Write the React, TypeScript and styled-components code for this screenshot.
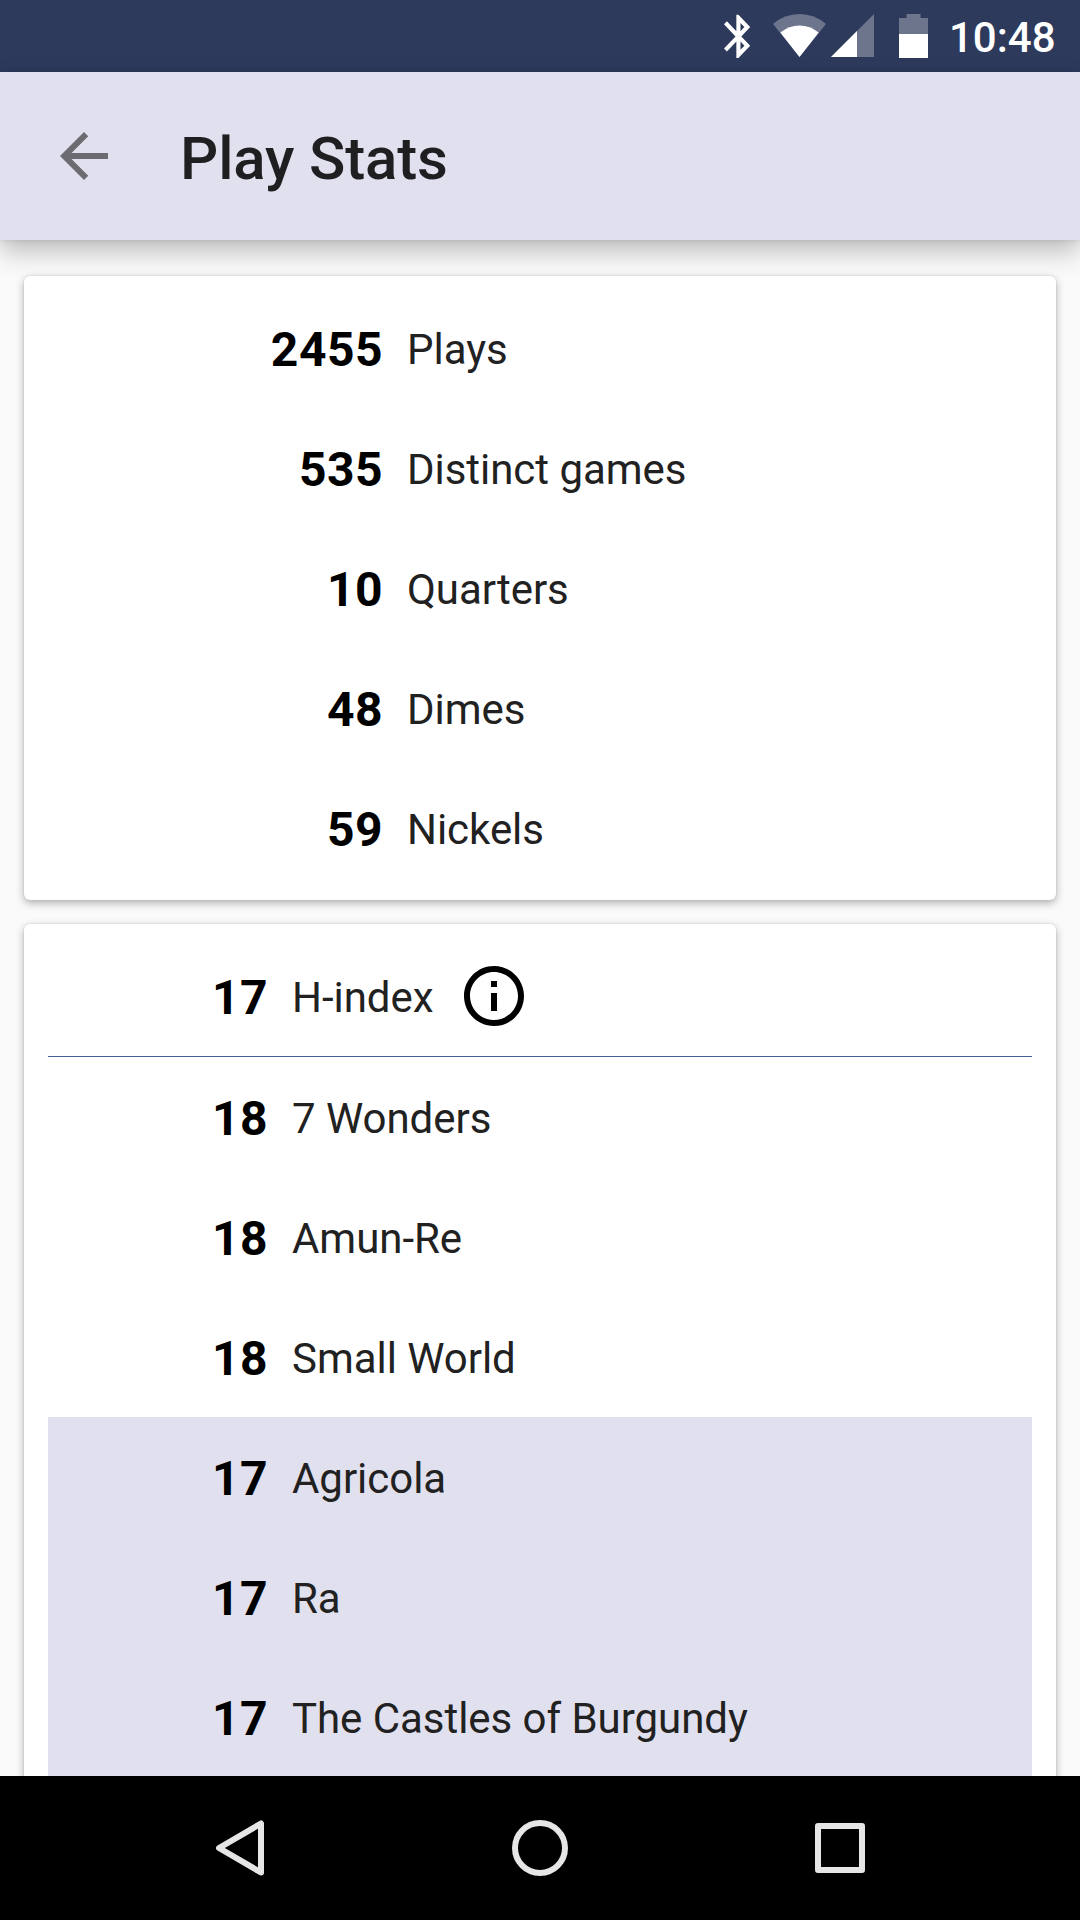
import React from "react";
import styled, { createGlobalStyle } from "styled-components";

const GlobalStyle = createGlobalStyle`
  * { box-sizing: border-box; }
  body { margin: 0; background: #fafafa; font-family: Roboto, "Liberation Sans", sans-serif; }
`;

const Screen = styled.div`
  width: 1080px;
  height: 1920px;
  display: flex;
  flex-direction: column;
  overflow: hidden;
  background: #fafafa;
`;

const StatusBar = styled.header`
  flex: none;
  height: 72px;
  padding-right: 24px;
  display: flex;
  align-items: center;
  justify-content: flex-end;
  background: #2e3a5c;
  color: #fff;
`;

const StatusIcons = styled.svg`
  display: block;
  width: 230px;
  height: 72px;
`;

const Clock = styled.span`
  width: 106px;
  padding-top: 4px;
  font-size: 42px;
  font-weight: 500;
  line-height: 48px;
  text-indent: -1px;
  white-space: nowrap;
`;

const Toolbar = styled.div`
  flex: none;
  height: 168px;
  padding-left: 48px;
  display: flex;
  align-items: center;
  gap: 60px;
  background: #e1e0ee;
  box-shadow: 0 12px 24px rgba(0, 0, 0, 0.24), 0 0 6px rgba(0, 0, 0, 0.12);
  z-index: 1;
`;

const BackIcon = styled.svg`
  display: block;
  width: 72px;
  height: 72px;
`;

const Title = styled.h1`
  margin: 5px 0 0;
  font-size: 60px;
  font-weight: 500;
  line-height: 72px;
  letter-spacing: -0.15px;
  color: #1f1f21;
`;

const Content = styled.main`
  flex: 1;
  min-height: 0;
  overflow: hidden;
  padding: 36px 24px 0;
  display: flex;
  flex-direction: column;
  gap: 24px;
`;

const Card = styled.section`
  flex: none;
  padding: 12px 24px;
  border-radius: 6px;
  background: #fff;
  box-shadow: 0 3px 8px rgba(0, 0, 0, 0.3), 0 0 2px rgba(0, 0, 0, 0.12);
`;

const Row = styled.div<{ $numberWidth: number; $highlighted?: boolean }>`
  height: 120px;
  display: grid;
  grid-template-columns: ${(p) => p.$numberWidth}px auto auto;
  justify-content: start;
  align-items: center;
  background: ${(p) => (p.$highlighted ? "#e1e0ee" : "transparent")};
`;

const Count = styled.span`
  padding-top: 3px;
  text-align: right;
  font-size: 48px;
  font-weight: 700;
  line-height: 56px;
  letter-spacing: 0.5px;
  color: #000;
`;

const Label = styled.span`
  padding: 4px 0 0 24px;
  font-size: 42px;
  line-height: 50px;
  letter-spacing: -0.04px;
  color: #212121;
  white-space: nowrap;
`;

const Divider = styled.hr`
  height: 1px;
  margin: 0;
  border: 0;
  background: #4a5f9a;
`;

const InfoIcon = styled.svg`
  display: block;
  width: 72px;
  height: 72px;
  margin-left: 24px;
`;

const NavBar = styled.nav`
  flex: none;
  height: 144px;
  display: flex;
  align-items: center;
  justify-content: center;
  gap: 204px;
  background: #000;
  z-index: 1;
`;

const NavIcon = styled.svg`
  display: block;
  width: 96px;
  height: 96px;
  fill: none;
  stroke: #e6e6e6;
  stroke-width: 6;
  stroke-linejoin: round;
`;

const totals = [
  { count: 2455, label: "Plays" },
  { count: 535, label: "Distinct games" },
  { count: 10, label: "Quarters" },
  { count: 48, label: "Dimes" },
  { count: 59, label: "Nickels" },
];

const H_INDEX = 17;

const games = [
  { count: 18, label: "7 Wonders" },
  { count: 18, label: "Amun-Re" },
  { count: 18, label: "Small World" },
  { count: 17, label: "Agricola" },
  { count: 17, label: "Ra" },
  { count: 17, label: "The Castles of Burgundy" },
];

export default function App() {
  return (
    <Screen>
      <GlobalStyle />
      <StatusBar>
        <StatusIcons viewBox="0 0 230 72" fill="#fff">
          {/* bluetooth */}
          <path
            transform="translate(-6.300 10.400) scale(2.060 2.165)"
            d="M17.710 7.710L12 2h-1v7.590L6.410 5 5 6.410 10.590 12 5 17.590 6.410 19 11 14.410V22h1l5.710-5.710-4.300-4.290 4.300-4.290zM13 5.830l1.880 1.880L13 9.590V5.830zm1.880 10.460L13 18.170v-3.760l1.880 1.880z"
          />
          {/* wifi */}
          <path d="M53 24 Q64.500 14 79.500 14 Q94.500 14 106 24 L79.500 57 Z" fillOpacity="0.3" />
          <path d="M60.300 32.500 Q69 25.500 79.500 25.500 Q90 25.500 98.700 32.500 L79.500 57 Z" />
          {/* cell signal */}
          <path d="M111 57 L154 14 V57 Z" fillOpacity="0.3" />
          <path d="M111 57 L137 31 V57 Z" />
          {/* battery */}
          <path d="M179 34 V18 H186.500 V14 H200.500 V18 H208 V34 Z" fillOpacity="0.3" />
          <path d="M179 34 H208 V58 H179 Z" />
        </StatusIcons>
        <Clock>10:48</Clock>
      </StatusBar>

      <Toolbar>
        <BackIcon viewBox="0 0 24 24" fill="#6b6b70">
          <path d="M20 11H7.830l5.590-5.590L12 4l-8 8 8 8 1.410-1.410L7.830 13H20v-2z" />
        </BackIcon>
        <Title>Play Stats</Title>
      </Toolbar>

      <Content>
        <Card>
          {totals.map((t) => (
            <Row key={t.label} $numberWidth={335}>
              <Count>{t.count}</Count>
              <Label>{t.label}</Label>
            </Row>
          ))}
        </Card>
        <Card>
          <Row $numberWidth={220}>
            <Count>{H_INDEX}</Count>
            <Label>H-index</Label>
            <InfoIcon viewBox="0 0 24 24">
              <path d="M11 17h2v-6h-2v6zm1-15C6.480 2 2 6.480 2 12s4.480 10 10 10 10-4.480 10-10S17.520 2 12 2zm0 18c-4.410 0-8-3.590-8-8s3.590-8 8-8 8 3.590 8 8-3.590 8-8 8zM11 9h2V7h-2v2z" />
            </InfoIcon>
          </Row>
          <Divider />
          {games.map((g) => (
            <Row key={g.label} $numberWidth={220} $highlighted={g.count === H_INDEX}>
              <Count>{g.count}</Count>
              <Label>{g.label}</Label>
            </Row>
          ))}
        </Card>
      </Content>

      <NavBar>
        <NavIcon viewBox="0 0 96 96">
          <path d="M69 23.500 V72.500 L27 48 Z" />
        </NavIcon>
        <NavIcon viewBox="0 0 96 96">
          <circle cx="48" cy="48" r="25" />
        </NavIcon>
        <NavIcon viewBox="0 0 96 96">
          <rect x="26" y="26" width="44" height="44" />
        </NavIcon>
      </NavBar>
    </Screen>
  );
}
